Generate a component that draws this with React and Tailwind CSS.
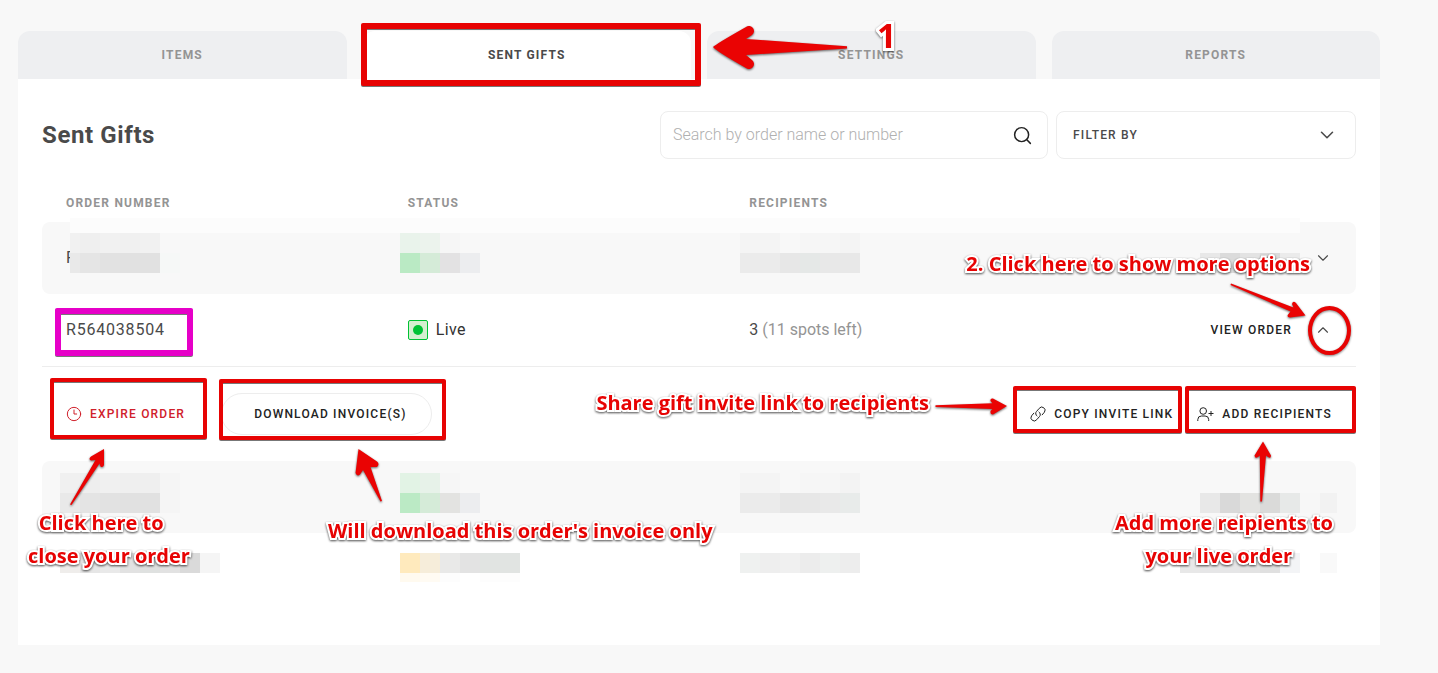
import { useState } from 'react'
import { ChevronDown, ChevronUp, Search, Clock3 } from 'lucide-react'

const TABS = ['Items', 'Sent Gifts', 'Settings', 'Reports']

// pixelated blocks that hide customer data, one class per 20px cell
const MOSAICS = [
  {
    place: 'top-[218px] left-[70px] right-[138px]',
    rows: [],
    band: true,
  },
  {
    place: 'top-[233px] left-[70px] w-[110px]',
    clipLeft: true,
    rows: [
      ['bg-[#f1f1f1]', 'bg-[#efefef]', 'bg-[#f1f1f1]', 'bg-[#f0f0f0]', 'bg-[#f1f1f1]', 'bg-[#f8f8f8]'],
      ['bg-[#e9e9e9]', 'bg-[#e5e5e5]', 'bg-[#e2e2e2]', 'bg-[#e1e1e1]', 'bg-[#e1e1e1]', 'bg-[#f6f8f7]'],
    ],
  },
  {
    place: 'top-[233px] left-[400px]',
    rows: [
      ['bg-[#e9f3eb]', 'bg-[#ecf3ed]', 'bg-[#f6f6f6]', 'bg-[#f8f8f8]'],
      ['bg-[#baeac4]', 'bg-[#d5ebd8]', 'bg-[#e3e2e3]', 'bg-[#ecedef]'],
    ],
  },
  {
    place: 'top-[233px] left-[740px]',
    rows: [
      ['bg-[#f4f4f4]', 'bg-[#f4f4f4]', 'bg-[#f8f8f8]', 'bg-[#f6f6f6]', 'bg-[#f6f6f6]', 'bg-[#f4f4f4]'],
      ['bg-[#ebebeb]', 'bg-[#ebebeb]', 'bg-[#e7e7e7]', 'bg-[#e5e8e7]', 'bg-[#e8e8e8]', 'bg-[#e8e8e8]'],
    ],
  },
  {
    place: 'top-[253px] right-[138px]',
    rows: [['bg-[#e8e8e8]', 'bg-[#dbdbdb]', 'bg-[#e3e3e3]', 'bg-[#dadada]', 'bg-[#ebebeb]']],
  },
  {
    place: 'top-[473px] left-[60px]',
    rows: [
      ['bg-[#f0f0f0]', 'bg-[#eeeeee]', 'bg-[#f0f0f0]', 'bg-[#efefef]', 'bg-[#efefef]', 'bg-[#f5f5f5]'],
      ['bg-[#e9e9e9]', 'bg-[#e4e4e4]', 'bg-[#e2e2e2]', 'bg-[#e1e1e1]', 'bg-[#e1e1e1]', 'bg-[#f5f5f5]'],
    ],
  },
  {
    place: 'top-[473px] left-[400px]',
    rows: [
      ['bg-[#e2f3e5]', 'bg-[#e7f2e9]', 'bg-[#f6f6f6]', 'bg-[#f8f8f8]'],
      ['bg-[#bbeac5]', 'bg-[#d5ebd8]', 'bg-[#e3e3e1]', 'bg-[#ecedef]'],
    ],
  },
  {
    place: 'top-[473px] left-[740px]',
    rows: [
      ['bg-[#f4f4f4]', 'bg-[#f4f4f4]', 'bg-[#f8f8f8]', 'bg-[#f6f6f6]', 'bg-[#f6f6f6]', 'bg-[#f3f3f3]'],
      ['bg-[#ebebeb]', 'bg-[#ebebeb]', 'bg-[#e6e6e6]', 'bg-[#e7e7e7]', 'bg-[#e9e9e9]', 'bg-[#e8ebea]'],
    ],
  },
  {
    place: 'top-[493px] right-[101px] w-[137px]',
    rows: [['bg-[#e8e8e8]', 'bg-[#d9d9d9]', 'bg-[#e3e3e1]', 'bg-[#dadad9]', 'bg-[#e7e9e8]', 'bg-[#f7f7f7]', 'bg-[#f2f2f2]']],
  },
  {
    place: 'top-[553px] left-[60px]',
    rows: [
      ['bg-[#efedeb]', 'bg-[#e6e6e6]', 'bg-[#e9e9e9]', 'bg-[#e2e2e2]', 'bg-[#dfe1e0]', 'bg-[#e2e2e2]', 'bg-[#dadada]', 'bg-[#f5f5f5]'],
    ],
  },
  {
    place: 'top-[553px] left-[400px]',
    rows: [
      ['bg-[#ffeabd]', 'bg-[#f6edda]', 'bg-[#e9e9e8]', 'bg-[#e3e3e3]', 'bg-[#e1e4e2]', 'bg-[#e1e4e2]'],
    ],
  },
  {
    place: 'top-[573px] left-[400px] h-[9px]',
    rows: [['bg-[#fffaef]', 'bg-[#fffbf3]', 'bg-[#fdfdfd]', 'bg-white', 'bg-[#fdfdfd]', 'bg-[#fdfdfd]']],
  },
  {
    place: 'top-[553px] left-[740px]',
    rows: [['bg-[#eff1f0]', 'bg-[#eeeeee]', 'bg-[#f0f0f0]', 'bg-[#ececec]', 'bg-[#eef0ef]', 'bg-[#ededed]']],
  },
  {
    place: 'top-[553px] right-[101px] w-[157px]',
    rows: [['bg-[#e8e8e8]', 'bg-[#e6e6e7]', 'bg-[#e6e6e7]', 'bg-[#e3e3e3]', 'bg-[#e0e0e0]', 'bg-[#f3f4f6]', 'bg-white', 'bg-[#f9f9f9]']],
  },
]

const HIGHLIGHTS = [
  'left-[361px] top-[23px] w-[340px] h-[63px] border-6 border-[#e70303]',
  'left-[55px] top-[308px] w-[138px] h-[48px] border-6 border-[#e600c8]',
  'left-[50px] top-[378px] w-[157px] h-[61px] border-4 border-[#e70303]',
  'left-[219px] top-[379px] w-[227px] h-[61px] border-4 border-[#e70303]',
  'right-[256px] top-[386px] w-[169px] h-[47px] border-4 border-[#e70303]',
  'right-[82px] top-[386px] w-[171px] h-[47px] border-4 border-[#e70303]',
]

const ARROWS = [
  {
    place: 'left-[710px] top-[20px] w-[140px] h-[54px]',
    box: '710 20 140 54',
    d: 'M713 47Q716 44 746 27A5 5 0 0 1 752 35L746 39L847 46.2V48.4L746 55L752 60A5 5 0 0 1 746 68Q716 51 713 47Z',
  },
  {
    place: 'right-[130px] top-[280px] w-[80px] h-[40px]',
    box: '1228 280 80 40',
    d: 'M1305.5 315.5L1296 303Q1293 300 1292 304L1293.5 307.5L1231 283.5L1230.5 285L1290.5 311.5L1288.5 314Q1286 317 1290 317.5Z',
  },
  {
    place: 'left-[66px] top-[446px] w-[42px] h-[62px]',
    box: '66 446 42 62',
    d: 'M104 449L91 456.5Q88 459 91 460.5L95.5 460L70 504.5L71.5 505L99.5 463.5L100.5 466.5Q103 468 104 465Z',
  },
  {
    place: 'left-[350px] top-[446px] w-[36px] h-[60px]',
    box: '350 446 36 60',
    d: 'M358.5 449L377 461.5Q380 464 377 467L370.5 467L382 501L380.5 501.5L363 470L360 474.5Q357 477 355.5 473Z',
  },
  {
    place: 'right-[428px] top-[394px] w-[78px] h-[24px]',
    box: '932 394 78 24',
    d: 'M1007 406L993 398.5Q990 398 990.5 401L992.5 403.3L935.5 405.3V407L992.5 409L990.5 411Q990 414.5 993 414.5Z',
  },
  {
    place: 'right-[164px] top-[438px] w-[24px] h-[68px]',
    box: '1250 438 24 68',
    d: 'M1263 441.5L1254.5 455.5Q1255 459 1258 457L1259.8 455.5L1260.3 501.5H1262L1266 455.5L1268 457Q1271 459 1271 455.5Z',
  },
]

const NOTES = [
  { place: 'right-[128px] top-[247px]', lines: ['2. Click here to show more options'] },
  { place: 'left-[28px] top-[506px]', lines: ['Click here to   ', 'close your order'] },
  { place: 'left-[328px] top-[514px]', lines: ["Will download this order's invoice only"] },
  { place: 'right-[509px] top-[386px]', lines: ['Share gift invite link to recipients'] },
  { place: 'right-[105px] top-[506px]', lines: ['Add more reipients to', 'your live order  '] },
]

function Mosaic({ place, rows, band, clipLeft }) {
  if (band) return <div className={'absolute h-[15px] bg-[#fcfcfc] ' + place} />
  return (
    <div className={'absolute overflow-hidden ' + place}>
      {rows.map((row, i) => (
        <div key={i} className={'flex ' + (clipLeft ? 'justify-end' : 'justify-start')}>
          {row.map((color, j) => (
            <div key={j} className={'w-5 h-5 shrink-0 ' + color} />
          ))}
        </div>
      ))}
    </div>
  )
}

function Arrow({ place, box, d }) {
  return (
    <svg
      viewBox={box}
      fill="#ea0303"
      className={'absolute drop-shadow-[0_1px_1px_rgba(0,0,0,0.6)] ' + place}
      aria-hidden="true"
    >
      <path d={d} />
    </svg>
  )
}

function LinkIcon() {
  return (
    <svg width="16" height="16" viewBox="0 0 16 16" fill="none" stroke="currentColor" strokeLinecap="round" aria-hidden="true">
      <path d="M7 10A2.9 2.9 0 0 1 6.4 5.6L9.2 2.4A3.2 3.2 0 0 1 14.4 6.2L12.2 8.8" />
      <path d="M9 6A2.9 2.9 0 0 1 9.6 10.4L6.8 13.6A3.2 3.2 0 0 1 1.6 9.8L3.8 7.2" />
    </svg>
  )
}

function AddUserIcon() {
  return (
    <svg width="17" height="16" viewBox="0 0 17 16" fill="none" stroke="currentColor" aria-hidden="true">
      <circle cx="6.2" cy="5" r="3.3" />
      <path d="M.8 15v-1.5A3.6 3.6 0 0 1 4.4 10h3.7a3.6 3.6 0 0 1 3.6 3.5V15M11.5 7.5h5M14 5v5" />
    </svg>
  )
}

function HiddenRow({ shaded, children }) {
  const bg = shaded ? 'bg-[#f8f8f8]' : ''
  return (
    <tr className="h-[72px]">
      <td className={'pl-6 rounded-l-lg ' + bg}>{children}</td>
      <td className={bg} />
      <td className={bg} />
      <td className={'pr-6 rounded-r-lg ' + bg}>
        {children && (
          <button className="block ml-auto" aria-label="Show options">
            <ChevronDown size={18} strokeWidth={1.5} />
          </button>
        )}
      </td>
    </tr>
  )
}

export default function App() {
  const [tab, setTab] = useState('Sent Gifts')
  const [open, setOpen] = useState(true)
  const [query, setQuery] = useState('')

  return (
    <div className="relative min-h-screen bg-[#f8f8f8] pt-[31px] pb-7 pl-[18px] pr-[58px] font-['Roboto',sans-serif] text-[#4a4a4a]">
      {/* Tabs */}
      <nav className="grid grid-cols-4 gap-4">
        {TABS.map(name => (
          <button
            key={name}
            onClick={() => setTab(name)}
            className={'h-12 rounded-t-xl text-xs font-bold uppercase tracking-widest ' + (
              tab === name ? 'bg-white text-[#4a4a4a]' : 'bg-[#eeeff1] text-[#949494]'
            )}
          >
            {name}
          </button>
        ))}
      </nav>

      <main className="bg-white px-6 pt-8 pb-10">
        <div className="flex items-center gap-2">
          <h1 className="flex-1 text-2xl font-bold tracking-wide">Sent Gifts</h1>
          <label className="flex h-12 w-[388px] items-center rounded-lg border border-[#ededed] pl-3 pr-[14px] text-[#222]">
            <input
              value={query}
              onChange={e => setQuery(e.target.value)}
              aria-label="Search orders"
              placeholder="Search by order name or number"
              className="min-w-0 flex-1 font-light outline-none placeholder:text-[#b0b0b0]"
            />
            <Search size={21} strokeWidth={1.7} />
          </label>
          <div className="relative w-[300px]">
            <select
              aria-label="Filter by"
              className="h-12 w-full appearance-none rounded-lg border border-[#ededed] bg-white px-4 text-xs font-medium uppercase tracking-widest"
            >
              <option>Filter by</option>
            </select>
            <ChevronDown size={22} strokeWidth={1.7} className="pointer-events-none absolute right-[18px] top-[13px]" />
          </div>
        </div>

        {/* Orders */}
        <table className="mt-6 w-full table-fixed border-separate border-spacing-0 text-left">
          <thead>
            <tr className="h-[39px] text-xs uppercase tracking-widest text-[#949494]">
              <th className="w-[26%] pl-6 font-bold">Order number</th>
              <th className="w-[26%] pl-6 font-bold">Status</th>
              <th className="w-[22%] pl-6 font-bold">Recipients</th>
              <th />
            </tr>
          </thead>
          <tbody>
            <HiddenRow shaded>R</HiddenRow>
            <tr className="h-[73px]">
              <td className="border-b border-[#ededed] pl-6 tracking-wider">R564038504</td>
              <td className="border-b border-[#ededed] pl-6 tracking-wide">
                <div className="flex items-center gap-2 text-[#333]">
                  <span className="flex size-5 items-center justify-center rounded-xs border border-[#00c234] bg-[#d5efd0]">
                    <span className="size-[10px] rounded-full bg-[#00c234]" />
                  </span>
                  Live
                </div>
              </td>
              <td className="border-b border-[#ededed] pl-6">
                3 <span className="text-[#949494]">(11 spots left)</span>
              </td>
              <td className="border-b border-[#ededed] pr-6">
                <div className="flex items-center justify-end gap-[22px]">
                  <a href="#order" className="text-xs font-medium uppercase tracking-widest text-[#222]">View order</a>
                  <button onClick={() => setOpen(!open)} aria-label="Toggle options">
                    <ChevronUp size={18} strokeWidth={1.5} />
                  </button>
                </div>
              </td>
            </tr>
            {open && (
              <tr className="h-[94px]">
                <td colSpan={4} className="px-6">
                  <div className="flex items-center text-xs font-medium text-[#222]">
                    <button className="flex items-center gap-2 uppercase tracking-widest text-[#d0202b]">
                      <Clock3 size={16} strokeWidth={1.5} />
                      Expire order
                    </button>
                    <button className="ml-9 h-[42px] rounded-full border border-[#ededed] pl-8 pr-6 uppercase tracking-widest">
                      Download invoice(s)
                    </button>
                    <button className="ml-auto flex items-center gap-2 uppercase tracking-widest">
                      <LinkIcon />
                      Copy invite link
                    </button>
                    <button className="ml-6 flex items-center gap-2 uppercase tracking-widest">
                      <AddUserIcon />
                      Add recipients
                    </button>
                  </div>
                </td>
              </tr>
            )}
            <HiddenRow shaded />
            <HiddenRow />
          </tbody>
        </table>
      </main>

      {/* Guide drawn over the page */}
      <div className="pointer-events-none absolute inset-0 overflow-hidden font-['Open_Sans',sans-serif] font-bold text-[#e70303]">
        {MOSAICS.map(m => <Mosaic key={m.place} {...m} />)}
        {HIGHLIGHTS.map(place => (
          <div key={place} className={'absolute rounded-xs drop-shadow-[0_1px_0_#777] ' + place} />
        ))}
        {ARROWS.map(a => <Arrow key={a.place} {...a} />)}
        <div className="absolute right-[87px] top-[306px] h-[49px] w-[43px] rounded-[50%] border-4 border-[#e70303] drop-shadow-[0_1px_1px_rgba(0,0,0,0.5)]" />
        <p className="absolute left-[877px] top-[15px] text-[34px]/10 drop-shadow-[0_1px_1px_rgba(0,0,0,0.6)] [-webkit-text-stroke:6px_#fff] [paint-order:stroke_fill]">
          1
        </p>
        {NOTES.map(note => (
          <p
            key={note.place}
            className={'absolute whitespace-pre text-center text-[20px]/[33px] drop-shadow-[0_1px_1px_rgba(0,0,0,0.7)] [-webkit-text-stroke:4px_#fff] [paint-order:stroke_fill] ' + note.place}
          >
            {note.lines.map(line => <span key={line} className="block">{line}</span>)}
          </p>
        ))}
      </div>
    </div>
  )
}
